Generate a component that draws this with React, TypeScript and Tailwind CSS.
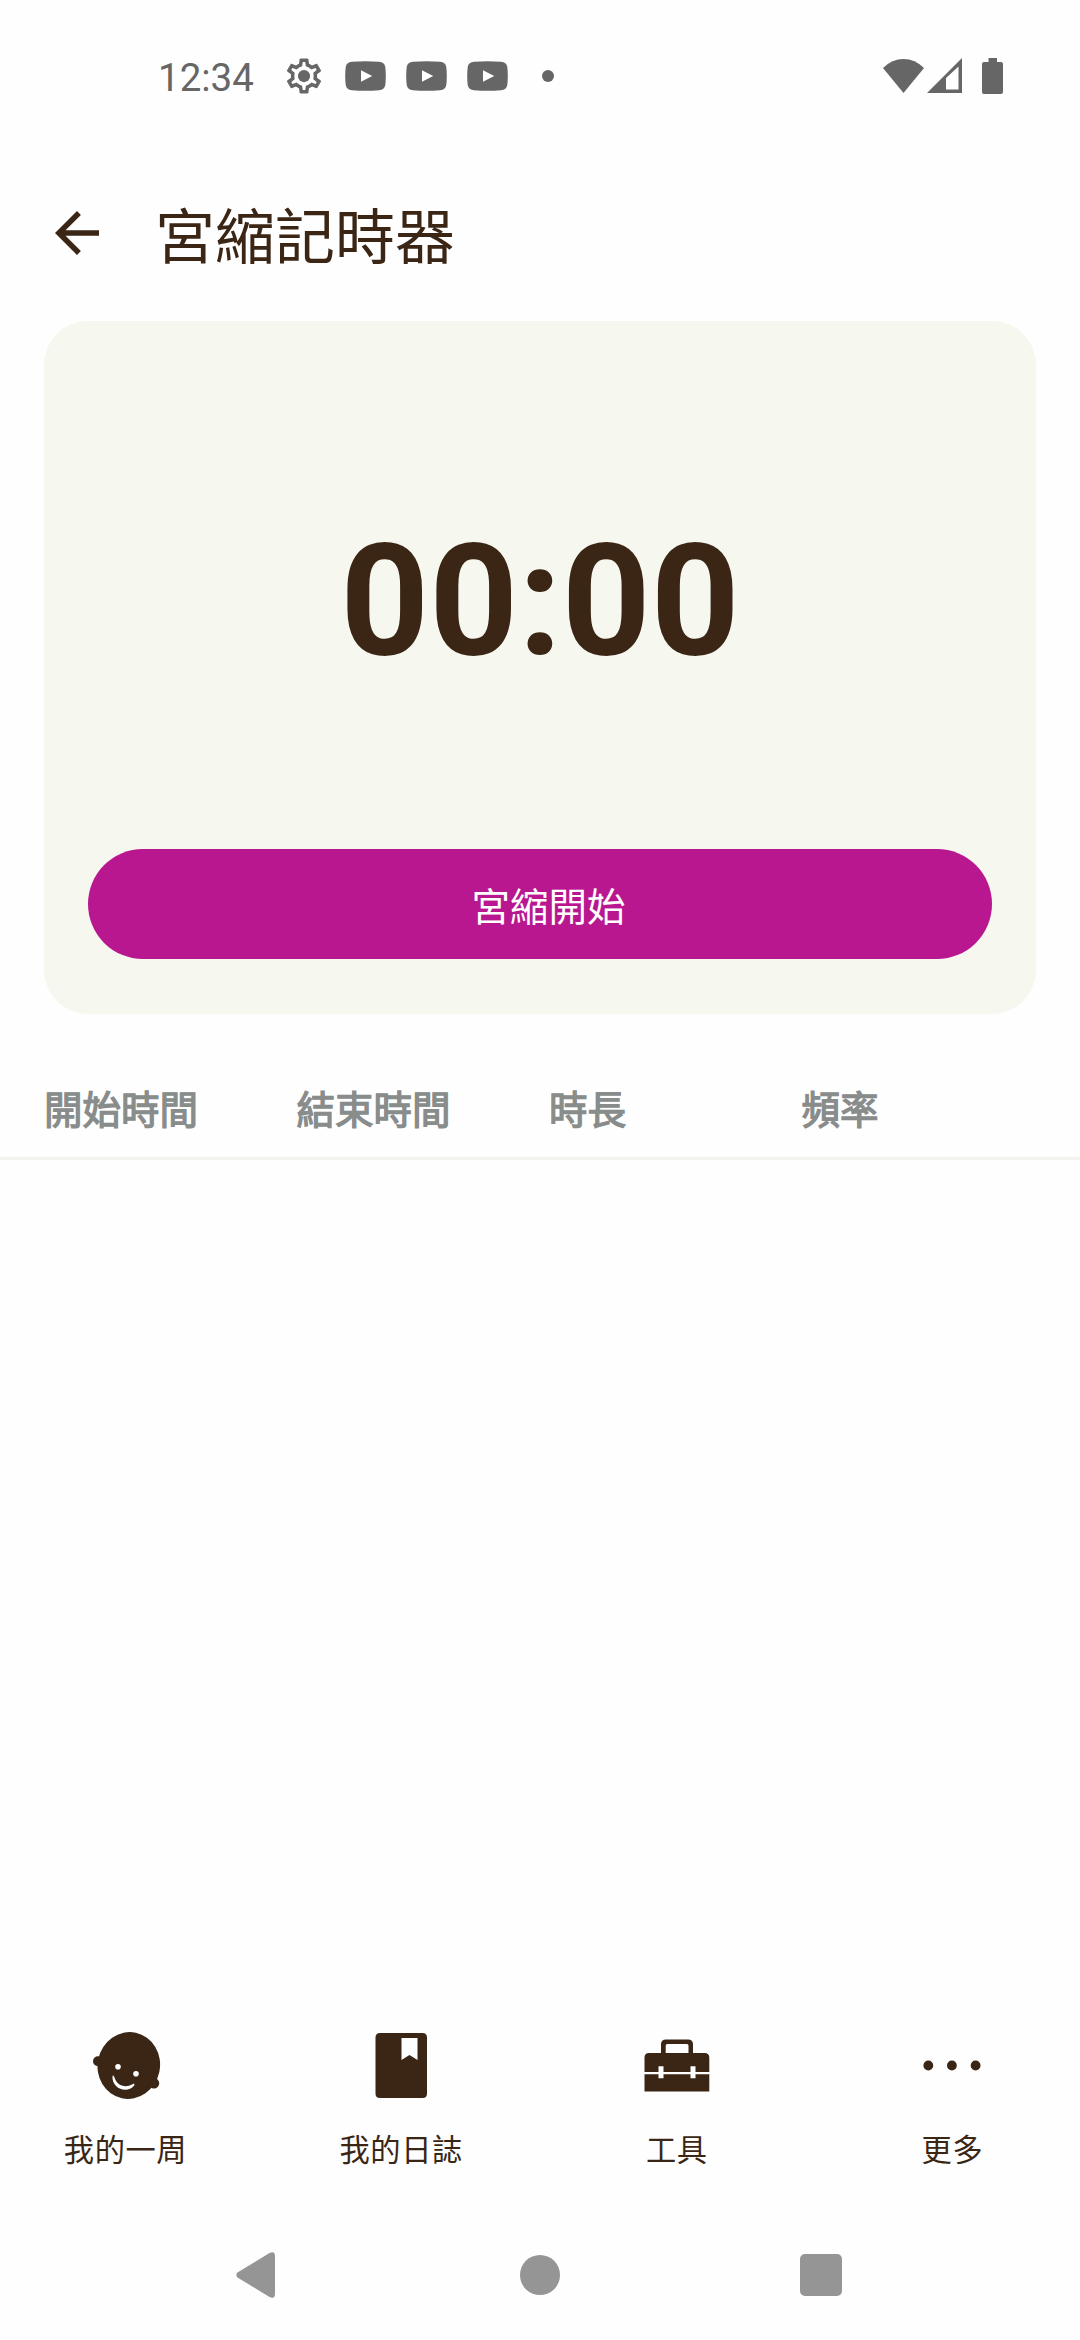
import { ReactNode } from "react";

type NavItemPropTypes = {
	label: string;
	children: ReactNode;
};

const columns = ["開始時間", "結束時間", "時長", "頻率"];

const YoutubeIcon = () => (
	<svg className="w-[41px] h-[30px]" viewBox="0 0 41 30" fill="#666666">
		<path
			fillRule="evenodd"
			d="M7 .8Q20.500 -.3 34 .8Q39.500 1 40.300 6Q41.300 15 40.300 24Q39.500 29 34 29.200Q20.500 30.300 7 29.200Q1.500 29 .7 24Q-.3 15 .7 6Q1.500 1 7 .8ZM16 9.200V20.800L27.200 15Z"
		/>
	</svg>
);

const StatusBar = () => (
	<div className="flex items-center h-[151px] pl-[158px] pr-[77px] shrink-0">
		<span className="w-[129px] text-[38.5px] leading-none text-[#666666] pt-[5px]">
			12:34
		</span>
		<svg className="w-[42px] h-[42px] -ml-[4px]" viewBox="0 0 24 24">
			<path
				fill="#666666"
				d="M19.430 12.980c.04-.32.07-.64.07-.98 0-.34-.03-.66-.07-.98l2.110-1.650c.19-.15.24-.42.12-.64l-2-3.460c-.09-.16-.26-.25-.44-.25-.06 0-.12.01-.17.03l-2.490 1c-.52-.4-1.080-.73-1.690-.98l-.38-2.650C14.460 2.180 14.250 2 14 2h-4c-.25 0-.46.18-.49.42l-.38 2.650c-.61.25-1.170.59-1.690.98l-2.490-1c-.06-.02-.12-.03-.18-.03-.17 0-.34.09-.43.25l-2 3.460c-.13.22-.07.49.12.64l2.110 1.650c-.04.32-.07.65-.07.98 0 .33.03.66.07.98l-2.110 1.650c-.19.15-.24.42-.12.64l2 3.460c.09.16.26.25.44.25.06 0 .12-.01.17-.03l2.490-1c.52.4 1.080.73 1.690.98l.38 2.650c.03.24.24.42.49.42h4c.25 0 .46-.18.49-.42l.38-2.650c.61-.25 1.170-.59 1.690-.98l2.490 1c.06.02.12.03.18.03.17 0 .34-.09.43-.25l2-3.460c.12-.22.07-.49-.12-.64l-2.110-1.650zm-1.980-1.710c.04.31.05.52.05.73 0 .21-.02.43-.05.73l-.14 1.130.89.7 1.080.84-.7 1.210-1.270-.51-1.040-.42-.9.68c-.43.32-.84.56-1.250.73l-1.060.43-.16 1.130-.2 1.350h-1.400l-.19-1.350-.16-1.130-1.060-.43c-.43-.18-.83-.41-1.230-.71l-.91-.7-1.060.43-1.270.51-.7-1.210 1.080-.84.89-.7-.14-1.130c-.03-.31-.05-.54-.05-.74s.02-.43.05-.73l.14-1.130-.89-.7-1.080-.84.7-1.210 1.270.51 1.040.42.9-.68c.43-.32.84-.56 1.250-.73l1.060-.43.16-1.130.2-1.350h1.390l.19 1.350.16 1.130 1.060.43c.43.18.83.41 1.230.71l.91.7 1.060-.43 1.270-.51.7 1.210-1.070.85-.89.7.14 1.130z"
			/>
			<circle cx="12" cy="12" r="3.500" fill="#666666" />
		</svg>
		<div className="flex gap-5 ml-5">
			<YoutubeIcon />
			<YoutubeIcon />
			<YoutubeIcon />
		</div>
		<div className="w-3 h-3 ml-[34px] rounded-full bg-[#666666]" />
		<div className="flex items-center ml-auto">
			<svg className="w-[41px] h-[34px]" viewBox="0 0 41 34" fill="#666666">
				<path d="M0 9Q9 0 20.500 0T41 9L20.500 34Z" />
			</svg>
			<svg
				className="w-[35px] h-[35px] ml-[3px]"
				viewBox="0 0 35 35"
				fill="#666666"
			>
				<path fillRule="evenodd" d="M0 35L35 0V35ZM19 20V31.500H31.500V8.500Z" />
			</svg>
			<svg
				className="w-[21px] h-[36px] ml-5"
				viewBox="0 0 21 36"
				fill="#666666"
			>
				<path d="M6.500 0H15V4H19Q21 4 21 6V34Q21 36 19 36H2Q0 36 0 34V6Q0 4 2 4H6.500Z" />
			</svg>
		</div>
	</div>
);

const NavItem = ({ label, children }: NavItemPropTypes) => (
	<button className="flex flex-col items-center w-[251px]">
		<svg className="w-[72px] h-[72px]" viewBox="0 0 72 72" fill="#3b2616">
			{children}
		</svg>
		<span className="mt-[27px] text-[30.25px] leading-[44px] tracking-[0.6px]">
			{label}
		</span>
	</button>
);

const App = () => {
	return (
		<div
			lang="zh-TW"
			className="flex flex-col w-full h-[2340px] overflow-hidden bg-[#fefefe] text-[#3b2616] font-[Roboto,'Noto_Sans_CJK_TC',sans-serif]"
		>
			<StatusBar />

			<header className="flex items-center h-[164px] pl-11 shrink-0">
				<svg className="w-[66px] h-[66px]" viewBox="0 0 24 24" fill="#3b2616">
					<path d="M20 11H7.830l5.590-5.590L12 4l-8 8 8 8 1.410-1.410L7.830 13H20v-2z" />
				</svg>
				<h1 className="ml-[45px] pt-[12px] text-[60px] leading-none">
					宮縮記時器
				</h1>
			</header>

			<section className="flex flex-col justify-between items-center h-[693px] mt-[6px] mx-11 px-11 pb-[55px] rounded-[44px] bg-[#f6f7ee] shrink-0">
				<div className="pt-[189px] text-[155px] leading-[182px] font-bold">
					00:00
				</div>
				<button className="w-full h-[110px] pt-2 pl-[17px] rounded-full bg-[#b9178f] text-white text-[38.5px]">
					宮縮開始
				</button>
			</section>

			<div className="flex items-center h-[146px] pl-11 pt-[51px] border-b-[3px] border-[#f2f3ef] shrink-0">
				{columns.map((column) => (
					<span
						key={column}
						className="w-[252.5px] text-[38.5px] leading-none text-[#888c8b] [-webkit-text-stroke:1.3px_#888c8b]"
					>
						{column}
					</span>
				))}
			</div>

			<nav className="flex justify-between mt-auto pr-[2px] pb-[36px] shrink-0">
				<NavItem label="我的一周">
					<ellipse
						cx="38.800"
						cy="35.500"
						rx="31.200"
						ry="33.500"
						transform="rotate(12 38.800 35.500)"
					/>
					<circle cx="8" cy="31.300" r="5" />
					<circle cx="64" cy="53.300" r="5.200" />
					<circle cx="28" cy="36.800" r="2.800" fill="#fefefe" />
					<circle cx="46" cy="43.800" r="2.800" fill="#fefefe" />
					<path
						fill="#fefefe"
						d="M22.500 46C21.500 58.500 37 64.500 44.200 55.500C45 54 44 53.300 42.500 54.300C35 58.500 27 55.500 24.500 47.500C23.500 45 22.800 45 22.500 46Z"
					/>
				</NavItem>
				<NavItem label="我的日誌">
					<path
						fillRule="evenodd"
						d="M15 3H57.500Q62 3 62 7.500V63.500Q62 68 57.500 68H15Q10.500 68 10.500 63.500V7.500Q10.500 3 15 3ZM36.500 8V30L44.500 25L52.500 30V8Z"
					/>
				</NavItem>
				<NavItem label="工具">
					<path
						fillRule="evenodd"
						d="M3.500 42V27.500Q3.500 23 8 23H20V14.500Q20 9.500 25 9.500H47Q52 9.500 52 14.500V23H63.500Q68.300 23 68.300 27.500V42H54.500V36.300H49.500V42H22.500V36.300H17.500V42ZM24.700 23H47.500V15.500Q47.500 14 46 14H26.200Q24.700 14 24.700 15.500Z"
					/>
					<path d="M3.500 44.300H17.500V48.300H22.500V44.300H49.500V48.300H54.500V44.300H68.300V61.500H3.500Z" />
				</NavItem>
				<NavItem label="更多">
					<circle cx="12.300" cy="35.500" r="4.900" />
					<circle cx="35.900" cy="35.500" r="4.900" />
					<circle cx="59.600" cy="35.500" r="4.900" />
				</NavItem>
			</nav>

			<footer className="flex items-center h-[131px] pl-[236px] shrink-0">
				<svg className="w-[39px] h-[46px]" viewBox="0 0 39 46" fill="#959595">
					<path d="M1.500 20.500L33.500 1Q39 -1.500 39 4V42Q39 47.500 33.500 45L1.500 25.500Q-.8 23 1.500 20.500Z" />
				</svg>
				<div className="w-[40px] h-[40px] ml-[245px] rounded-full bg-[#959595]" />
				<div className="w-[42px] h-[42px] ml-[240px] rounded-[5px] bg-[#959595]" />
			</footer>
		</div>
	);
};

export default App;
